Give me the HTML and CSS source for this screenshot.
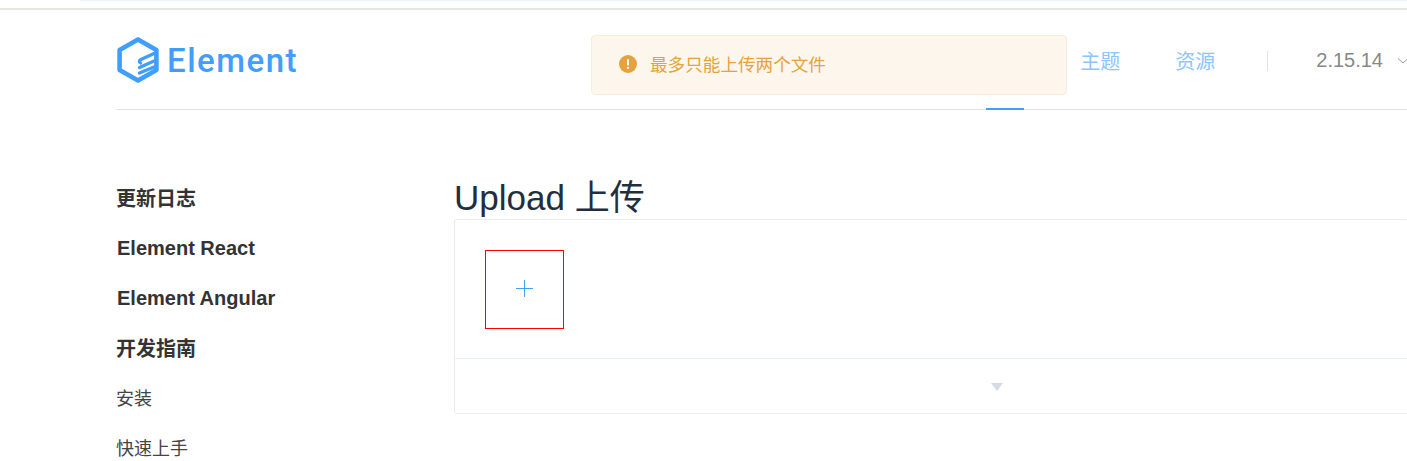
FILE: index.html
```html
<!DOCTYPE html>
<html lang="zh-CN">
<head>
  <meta charset="UTF-8">
  <meta name="viewport" content="width=device-width, initial-scale=1.0">
  <title>Upload 上传</title>
  <link rel="stylesheet" href="styles.css">
</head>
<body>
  <div class="browser-edge"><span class="browser-tab"></span></div>

  <!-- 提示消息 -->
  <div class="message">
    <svg class="message-icon" viewBox="0 0 16 16">
      <circle cx="8" cy="8" r="8" fill="#e6a23c"/>
      <rect x="7.1" y="3.6" width="1.8" height="5.8" rx="0.8" fill="#fff"/>
      <circle cx="8" cy="11.5" r="1" fill="#fff"/>
    </svg>
    <span>最多只能上传两个文件</span>
  </div>

  <header class="header">
    <a class="logo">
      <svg class="logo-mark" viewBox="0 0 42 46">
        <path d="M21 2.4 L39.4 13 V33 L21 43.6 L2.6 33 V13 Z" fill="none" stroke="#409eff" stroke-width="4.6" stroke-linejoin="round"/>
        <path d="M37 16.5 L24 22.5 Q21 24.2 23.5 26 M37 24 L22.5 30.5 M37 30 L22.5 36" fill="none" stroke="#409eff" stroke-width="3.3" stroke-linecap="round"/>
      </svg>
      <span class="logo-text">Element</span>
    </a>
    <nav class="nav">
      <a class="nav-link">主题</a>
      <a class="nav-link">资源</a>
      <span class="nav-sep"></span>
      <span class="version">2.15.14</span>
      <svg class="caret" viewBox="0 0 12 8"><path d="M1 1.5 L6 6 L11 1.5" fill="none" stroke="#9a9a9a" stroke-width="1"/></svg>
    </nav>
    <span class="nav-active"></span>
  </header>

  <div class="page">
    <aside class="side">
      <a class="side-group side-cjk">更新日志</a>
      <a class="side-group">Element React</a>
      <a class="side-group">Element Angular</a>
      <a class="side-group side-cjk">开发指南</a>
      <a class="side-item side-cjk">安装</a>
      <a class="side-item side-cjk">快速上手</a>
    </aside>
    <main class="main">
      <h2 class="title">Upload 上传</h2>
      <div class="demo">
        <div class="demo-source">
          <div class="upload-box"><span class="plus"></span></div>
        </div>
        <div class="demo-control"><span class="arrow-down"></span></div>
      </div>
    </main>
  </div>
</body>
</html>
```

FILE: styles.css
```css
* {
  box-sizing: border-box;
}
html, body {
  height: 461px;
  overflow: hidden;
}
body {
  margin: 0;
  font-family: "Liberation Sans", "Noto Sans CJK SC", sans-serif;
  background-color: #fff;
  color: #333;
}
.browser-edge {
  height: 10px;
  padding-left: 80px;
  background-color: #fff;
  border-bottom: 2px solid #e8e6e1;
}
.browser-tab {
  display: block;
  height: 1px;
  background-color: #eef3fb;
}
.header {
  position: relative;
  height: 100px;
  margin-left: 117px;
  display: flex;
  align-items: center;
  justify-content: space-between;
  border-bottom: 1px solid #dcdfe6;
}
.logo {
  display: flex;
  align-items: center;
  gap: 8px;
  padding-top: 1px;
}
.logo-mark {
  width: 42px;
  height: 46px;
}
.logo-text {
  font-family: "Roboto", sans-serif;
  font-size: 33px;
  font-weight: 500;
  letter-spacing: 1.5px;
  line-height: 46px;
  padding-top: 2px;
  color: #409eff;
}
.nav {
  display: flex;
  align-items: center;
  height: 40px;
  padding-top: 2px;
}
.nav-link {
  margin-right: 55px;
  font-size: 20px;
  color: #8cc5ff;
}
.nav-link:first-child {
  margin-left: 3px;
}
.nav-sep {
  width: 1px;
  height: 20px;
  margin-left: -3px;
  margin-right: 48px;
  background-color: #e3e3e3;
}
.version {
  font-size: 20px;
  color: #888;
}
.caret {
  width: 12px;
  height: 8px;
  margin-left: 14px;
  margin-right: -2px;
}
.nav-active {
  position: absolute;
  left: 869px;
  bottom: -1px;
  width: 38px;
  height: 2px;
  background-color: #409eff;
}
.message {
  position: absolute;
  top: 35px;
  left: 591px;
  width: 476px;
  height: 60px;
  padding: 0 0 3px 27px;
  display: flex;
  align-items: center;
  gap: 13px;
  background-color: #fdf6ec;
  border: 1px solid #faecd8;
  border-radius: 4px;
  color: #e6a23c;
  font-size: 17.6px;
  z-index: 2;
}
.message-icon {
  width: 18px;
  height: 18px;
}
.page {
  display: flex;
  padding-left: 117px;
}
.side {
  width: 337px;
  padding-top: 63px;
  display: flex;
  flex-direction: column;
}
.side-group {
  height: 50px;
  line-height: 50px;
  font-size: 20px;
  font-weight: bold;
  color: #333;
}
.side-item {
  height: 50px;
  line-height: 50px;
  font-size: 18px;
  color: #444;
}
.side-cjk {
  margin-left: -1px;
  line-height: 52px;
}
.main {
  flex: 1;
  min-width: 0;
  margin-right: -2px;
}
.title {
  margin: 66px 0 0;
  height: 43px;
  line-height: 44px;
  font-size: 35px;
  font-weight: 400;
  color: #1f2f3d;
}
.demo {
  border: 1px solid #ebebeb;
  border-radius: 3px;
}
.demo-source {
  height: 139px;
  padding: 30px;
  border-bottom: 1px solid #eaeefb;
}
.upload-box {
  width: 79px;
  height: 79px;
  padding-bottom: 2px;
  display: flex;
  align-items: center;
  justify-content: center;
  border: 1px solid #f00;
}
.plus {
  position: relative;
  width: 17px;
  height: 17px;
}
.plus::before, .plus::after {
  content: "";
  position: absolute;
  background-color: #409eff;
}
.plus::before {
  left: 0;
  top: 8px;
  width: 17px;
  height: 1px;
}
.plus::after {
  left: 8px;
  top: 0;
  width: 1px;
  height: 17px;
}
.demo-control {
  height: 54px;
  display: flex;
  align-items: center;
  justify-content: center;
}
.arrow-down {
  width: 0;
  height: 0;
  border-left: 6.5px solid transparent;
  border-right: 6.5px solid transparent;
  border-top: 8px solid #d3dce6;
  margin-top: 2px;
  margin-left: 131px;
}
```
